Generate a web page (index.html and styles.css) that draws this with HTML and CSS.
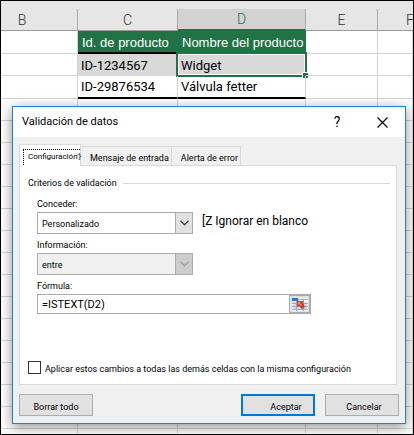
FILE: index.html
```html
<!DOCTYPE html>
<html lang="es">
<head>
<meta charset="utf-8">
<title>Validación de datos</title>
<link rel="stylesheet" href="styles.css">
</head>
<body>
<main class="workbook">
  <table class="sheet">
    <colgroup><col class="col-b"><col class="col-c"><col class="col-d"><col class="col-e"><col></colgroup>
    <thead>
      <tr><th>B</th><th>C</th><th class="current">D</th><th>E</th><th class="last">F</th></tr>
    </thead>
    <tbody>
      <tr class="tall heading"><td></td><td class="green ruled">Id. de producto</td><td class="green ruled">Nombre del producto</td><td></td><td></td></tr>
      <tr><td></td><td class="shaded">ID-1234567</td><td class="shaded selected">Widget<span class="handle"></span></td><td></td><td></td></tr>
      <tr class="tall"><td></td><td class="ruled">ID-29876534</td><td class="ruled">Válvula fetter</td><td></td><td></td></tr>
      <tr><td></td><td></td><td></td><td></td><td></td></tr>
      <tr><td></td><td></td><td></td><td></td><td></td></tr>
      <tr><td></td><td></td><td></td><td></td><td></td></tr>
      <tr><td></td><td></td><td></td><td></td><td></td></tr>
      <tr><td></td><td></td><td></td><td></td><td></td></tr>
      <tr><td></td><td></td><td></td><td></td><td></td></tr>
      <tr><td></td><td></td><td></td><td></td><td></td></tr>
      <tr><td></td><td></td><td></td><td></td><td></td></tr>
      <tr><td></td><td></td><td></td><td></td><td></td></tr>
      <tr><td></td><td></td><td></td><td></td><td></td></tr>
      <tr><td></td><td></td><td></td><td></td><td></td></tr>
      <tr><td></td><td></td><td></td><td></td><td></td></tr>
      <tr><td></td><td></td><td></td><td></td><td></td></tr>
      <tr><td></td><td></td><td></td><td></td><td></td></tr>
      <tr><td></td><td></td><td></td><td></td><td></td></tr>
      <tr><td></td><td></td><td></td><td></td><td></td></tr>
    </tbody>
  </table>

  <section class="dialog" role="dialog" aria-labelledby="title">
    <header class="titlebar">
      <h1 id="title">Validación de datos</h1>
      <button class="caption-button" type="button">?</button>
      <button class="caption-button" type="button" aria-label="Cerrar">
        <svg width="11" height="11" viewBox="0 0 11 11"><path d="M.5.5l10 10M10.500.5l-10 10" stroke="#000" stroke-width="1.200"/></svg>
      </button>
    </header>
    <form class="content">
      <div class="tabs" role="tablist">
        <button class="tab active" type="button" role="tab" aria-selected="true"><span class="focus">Configuración'}</span></button>
        <button class="tab" type="button" role="tab">Mensaje de entrada</button>
        <button class="tab" type="button" role="tab">Alerta de error</button>
      </div>
      <div class="panel" role="tabpanel">
        <h2 class="group-title">Criterios de validación</h2>
        <div class="criteria">
          <label for="allow">Conceder:</label>
          <div class="line">
            <div class="combo">
              <select id="allow"><option>Personalizado</option></select>
              <span class="arrow"><svg width="9" height="6" viewBox="0 0 9 6"><path d="M.5.8l4 4 4-4" fill="none" stroke="#444" stroke-width="1.300"/></svg></span>
            </div>
            <span class="ignore">[Z Ignorar en blanco</span>
          </div>
          <label for="data">Información:</label>
          <div class="combo disabled">
            <select id="data" disabled><option>entre</option></select>
            <span class="arrow"><svg width="9" height="6" viewBox="0 0 9 6"><path d="M.5.8l4 4 4-4" fill="none" stroke="#a0a0a0" stroke-width="1.300"/></svg></span>
          </div>
          <label for="formula">Fórmula:</label>
          <div class="formula">
            <input id="formula" type="text" value="=ISTEXT(D2)">
            <button class="picker" type="button" aria-label="Seleccionar rango">
              <svg width="16" height="13" viewBox="0 0 16 13">
                <path fill="#fff" d="M0 0h16v13H0z"/>
                <path fill="#cddcf0" d="M1 4h14v8H1z"/>
                <path fill="#3f6fc4" d="M0 0h6v3H0z"/>
                <path fill="#8fa9d0" d="M6 1h10v1H6zM0 5h16v1H0zM0 8h16v1H0zM0 11h16v1H0zM4 3h1v10H4zM11 2h1v11h-1z"/>
                <path fill="#d83a1c" d="M5 3h6v2l2 4-3 2-3-3-2 1z"/>
                <path fill="#f08a68" d="M6 4h3L8 5l2 2-1 1-2-2-1 1z"/>
              </svg>
            </button>
          </div>
        </div>
        <label class="apply"><input type="checkbox"><span>Aplicar estos cambios a todas las demás celdas con la misma configuración</span></label>
      </div>
      <footer class="actions">
        <button class="button" type="button">Borrar todo</button>
        <button class="button primary" type="submit">Aceptar</button>
        <button class="button cancel" type="button">Cancelar</button>
      </footer>
    </form>
  </section>
</main>
</body>
</html>
```
FILE: styles.css
```css
* { box-sizing: border-box; }
body {
  margin: 0;
  font: 9px/14px Roboto, "Liberation Sans", sans-serif;
  color: #000;
}
button, input, select { font: inherit; color: inherit; }
.workbook {
  position: relative;
  height: 100vh;
  overflow: hidden;
  border: 1px solid #000;
  padding-top: 8px;
  background: #e6e6e6;
}

/* Worksheet grid */
.sheet {
  width: 100%;
  table-layout: fixed;
  border-collapse: separate;
  border-spacing: 0;
  background: #fff;
  font-size: 13px;
}
.col-b { width: 77px; }
.col-c { width: 100px; }
.col-d { width: 128px; }
.col-e { width: 72px; }
.sheet th {
  height: 22px;
  padding: 0;
  border-right: 1px solid #ababab;
  border-bottom: 1px solid #9b9b9b;
  background: #e6e6e6;
  color: #333;
  font-size: 14px;
  font-weight: 300;
  line-height: 18px;
}
.sheet th:first-child { padding-right: 34px; }
.sheet th.last { padding-left: 28px; border-right: 0; text-align: left; overflow: hidden; }
.sheet th.current {
  border-bottom: 2px solid #217346;
  background: #d2d2d2;
  color: #217346;
}
.sheet td {
  position: relative;
  height: 22px;
  padding: 0 0 0 3px;
  border-right: 1px solid #d4d4d4;
  border-bottom: 1px solid #d4d4d4;
  line-height: 18px;
  white-space: nowrap;
}
.sheet .tall td { height: 23px; }
.sheet .heading td { padding: 3px 0 0 4px; font-family: "Liberation Sans", sans-serif; }
.sheet .green { background: #217346; border-color: #217346; color: #fff; }
.sheet .ruled { border-bottom: 2px solid #000; }
.sheet .shaded { padding-top: 2px; background: #d9d9d9; border-color: #d9d9d9; }
.selected::before {
  content: "";
  position: absolute;
  inset: -2px -2px -2px -2px;
  border: 2px solid #217346;
  box-shadow: inset 0 0 0 1px #fff;
}
.handle {
  position: absolute;
  right: -3px;
  bottom: -3px;
  width: 6px;
  height: 6px;
  border: solid #fff;
  border-width: 1px 0 0 1px;
  background: #217346;
}

/* Dialog window */
.dialog {
  position: absolute;
  top: 105px;
  left: 11px;
  right: 7px;
  border: 1px solid #1883d7;
  background: #f0f0f0;
  box-shadow: 0 3px 12px rgba(0, 0, 0, .45);
}
.titlebar {
  display: flex;
  align-items: center;
  height: 30px;
  padding: 0 8px 0 9px;
  background: #fff;
}
.titlebar h1 {
  flex: 1;
  margin: 0;
  font-size: 11px;
  font-weight: 400;
}
.caption-button {
  display: grid;
  place-items: center;
  width: 30px;
  height: 28px;
  margin-left: 15px;
  padding: 0;
  border: 0;
  background: none;
  font-size: 14px;
}
.content { padding: 7px 6px; }
.tabs { display: flex; align-items: flex-end; }
.tab {
  height: 19px;
  padding: 4px 2px 0 9px;
  border: 1px solid #d9d9d9;
  border-width: 1px 1px 0 0;
  background: #f0f0f0;
  white-space: nowrap;
}
.tab.active {
  height: 22px;
  width: 62px;
  margin-bottom: -1px;
  padding: 3px 0 0 3px;
  border-left-width: 1px;
  background: #fff;
  font-size: 8px;
  text-align: left;
  z-index: 1;
}
.focus {
  display: block;
  height: 16px;
  border-top: 1px dotted #000;
  border-left: 1px dotted #000;
  padding-left: 4px;
  line-height: 14px;
}
.panel {
  margin-right: 2px;
  padding: 10px 6px 8px 8px;
  border: 1px solid #d9d9d9;
  background: #fff;
}
.group-title {
  display: flex;
  align-items: center;
  gap: 6px;
  margin: 0 0 7px;
  font-size: 9px;
  font-weight: 400;
}
.group-title::after { content: ""; flex: 1; height: 1px; background: #d9d9d9; }
.criteria { padding-left: 9px; }
.criteria label { display: block; margin-bottom: 1px; }
.line { display: flex; align-items: center; gap: 9px; }
.combo {
  position: relative;
  width: 156px;
  height: 22px;
  margin-bottom: 4px;
}
.combo select {
  appearance: none;
  width: 100%;
  height: 100%;
  padding: 2px 20px 0 4px;
  border: 1px solid #ababab;
  border-radius: 0;
  background: #fff;
  opacity: 1;
}
.arrow {
  position: absolute;
  top: 0;
  right: 0;
  display: grid;
  place-items: center;
  width: 18px;
  height: 100%;
  border: 1px solid #ababab;
  background: #e1e1e1;
  pointer-events: none;
}
.combo.disabled select { background: #f0f0f0; }
.combo.disabled .arrow { background: #ccc; }
.ignore { margin-bottom: 8px; font-size: 12px; }
.formula {
  display: flex;
  width: 274px;
  height: 20px;
  border: 1px solid #ababab;
}
.formula input {
  flex: 1;
  min-width: 0;
  padding: 2px 4px 0;
  border: 0;
  font-size: 11px;
}
.picker {
  display: grid;
  place-items: center;
  width: 21px;
  padding: 0;
  border: 1px solid #ababab;
  background: #e1e1e1;
}
.apply { display: flex; align-items: center; gap: 4px; margin-top: 45px; white-space: nowrap; }
.apply span { padding-top: 3px; }
.apply input {
  flex: none;
  appearance: none;
  width: 13px;
  height: 13px;
  margin: 0;
  border: 1px solid #333;
  background: #fff;
}
.actions { display: flex; gap: 10px; padding-top: 9px; }
.button {
  width: 74px;
  height: 22px;
  padding: 3px 0 0;
  border: 1px solid #adadad;
  background: #e1e1e1;
}
.primary {
  margin-left: auto;
  padding-left: 16px;
  border: 2px solid #0078d7;
}
.cancel { padding-left: 4px; }
```
